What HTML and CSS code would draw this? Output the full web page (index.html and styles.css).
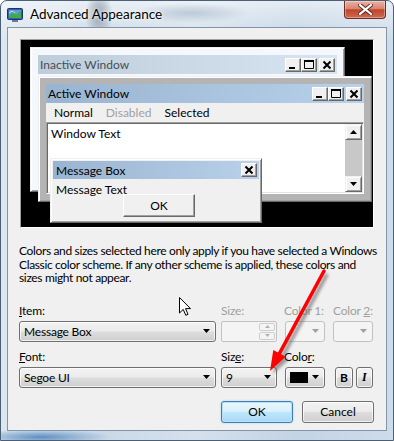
FILE: index.html
```html
<!DOCTYPE html>
<html lang="en">

<head>
    <meta charset="UTF-8" />
    <title>Advanced Appearance</title>
    <link rel="stylesheet" href="styles.css">
</head>

<body>
    <div class="dialog">
        <div class="title-bar">
            <svg class="app-icon" width="16" height="16" viewBox="0 0 16 16">
                <rect x="0.5" y="1.5" width="15" height="11" rx="1" fill="#3a5fa8" stroke="#1d3170" />
                <rect x="2" y="3" width="12" height="8" fill="#5d9be0" />
                <path d="M2 9 L6 5 L9 8 L14 4 L14 11 L2 11 Z" fill="#3dab4a" />
                <path d="M2 6 L5 4 L8 6" stroke="#b9e4ff" stroke-width="1" fill="none" />
                <rect x="5" y="13" width="6" height="2" fill="#6b7a8c" />
            </svg>
            <span class="title-text">Advanced Appearance</span>
            <div class="close-btn">
                <svg width="15" height="11" viewBox="0 0 15 11">
                    <path d="M2 1 L13 10 M13 1 L2 10" stroke="#5a2418" stroke-width="4" stroke-linecap="square" />
                    <path d="M2 1 L13 10 M13 1 L2 10" stroke="#fff" stroke-width="2.2" stroke-linecap="square" />
                </svg>
            </div>
        </div>

        <div class="client">
            <!-- preview of the classic scheme -->
            <div class="preview">
                <div class="win win-inactive">
                    <div class="caption inactive">
                        <span>Inactive Window</span>
                        <div class="cap-btns">
                            <div class="cap-btn"><svg width="14" height="12"><rect x="3" y="8" width="6" height="2" /></svg></div>
                            <div class="cap-btn"><svg width="14" height="12"><path d="M2.5 1.5 H11.5 V9.5 H2.5 Z" fill="none" stroke="#000" /><rect x="2" y="1" width="10" height="2" /></svg></div>
                            <div class="cap-btn close"><svg width="14" height="12"><path d="M3.5 2.5 L10.5 9.5 M10.5 2.5 L3.5 9.5" stroke="#000" stroke-width="2" /></svg></div>
                        </div>
                    </div>
                </div>

                <div class="win win-active">
                    <div class="caption active">
                        <span>Active Window</span>
                        <div class="cap-btns">
                            <div class="cap-btn"><svg width="14" height="12"><rect x="3" y="8" width="6" height="2" /></svg></div>
                            <div class="cap-btn"><svg width="14" height="12"><path d="M2.5 1.5 H11.5 V9.5 H2.5 Z" fill="none" stroke="#000" /><rect x="2" y="1" width="10" height="2" /></svg></div>
                            <div class="cap-btn close"><svg width="14" height="12"><path d="M3.5 2.5 L10.5 9.5 M10.5 2.5 L3.5 9.5" stroke="#000" stroke-width="2" /></svg></div>
                        </div>
                    </div>
                    <div class="menu-bar">
                        <span>Normal</span>
                        <span class="disabled">Disabled</span>
                        <span>Selected</span>
                    </div>
                    <div class="text-area">
                        <div class="text-body">Window Text</div>
                        <div class="scrollbar">
                            <div class="sb-btn"><svg width="7" height="4"><path d="M3.5 0 L7 4 L0 4 Z" /></svg></div>
                            <div class="sb-track"></div>
                            <div class="sb-btn"><svg width="7" height="4"><path d="M0 0 L7 0 L3.5 4 Z" /></svg></div>
                        </div>
                    </div>
                </div>

                <div class="win msg-box">
                    <div class="caption active">
                        <span>Message Box</span>
                        <div class="cap-btns">
                            <div class="cap-btn close"><svg width="14" height="12"><path d="M3.5 2.5 L10.5 9.5 M10.5 2.5 L3.5 9.5" stroke="#000" stroke-width="2" /></svg></div>
                        </div>
                    </div>
                    <div class="msg-body">
                        <div class="msg-text">Message Text</div>
                        <div class="classic-btn">OK</div>
                    </div>
                </div>
            </div>

            <p class="note">Colors and sizes selected here only apply if you have selected a Windows<br>Classic color scheme. If any other scheme is applied, these colors and<br>sizes might not appear.</p>

            <div class="fields">
                <label><u>I</u>tem:</label>
                <label class="off">Size:</label>
                <label class="off">Color 1:</label>
                <label class="off">Color <u>2</u>:</label>

                <div class="combo wide">
                    <span>Message Box</span>
                    <svg class="drop" width="7" height="4"><path d="M0 0 L7 0 L3.5 4 Z" /></svg>
                </div>
                <div class="spin off">
                    <div class="spin-btns">
                        <div class="spin-btn"><svg width="5" height="3"><path d="M2.5 0 L5 3 L0 3 Z" /></svg></div>
                        <div class="spin-btn"><svg width="5" height="3"><path d="M0 0 L5 0 L2.5 3 Z" /></svg></div>
                    </div>
                </div>
                <div class="combo small off shift">
                    <svg class="drop" width="7" height="4"><path d="M0 0 L7 0 L3.5 4 Z" /></svg>
                </div>
                <div class="combo small off">
                    <svg class="drop" width="7" height="4"><path d="M0 0 L7 0 L3.5 4 Z" /></svg>
                </div>

                <label class="row2"><u>F</u>ont:</label>
                <label class="row2">Siz<u>e</u>:</label>
                <label class="row2">Colo<u>r</u>:</label>
                <span></span>

                <div class="combo wide">
                    <span>Segoe UI</span>
                    <svg class="drop" width="7" height="4"><path d="M0 0 L7 0 L3.5 4 Z" /></svg>
                </div>
                <div class="combo size">
                    <span>9</span>
                    <svg class="drop" width="7" height="4"><path d="M0 0 L7 0 L3.5 4 Z" /></svg>
                </div>
                <div class="combo small shift">
                    <span class="swatch"></span>
                    <svg class="drop" width="7" height="4"><path d="M0 0 L7 0 L3.5 4 Z" /></svg>
                </div>
                <div class="style-btns">
                    <div class="style-btn bold">B</div>
                    <div class="style-btn italic">I</div>
                </div>
            </div>

            <div class="actions">
                <button class="btn default">OK</button>
                <button class="btn">Cancel</button>
            </div>
        </div>

        <!-- red annotation arrow -->
        <svg class="annotation" width="394" height="441" viewBox="0 0 394 441">
            <defs>
                <filter id="soft" x="-20%" y="-20%" width="140%" height="140%">
                    <feGaussianBlur stdDeviation="1.5" />
                </filter>
            </defs>
            <g transform="translate(3 3)" filter="url(#soft)" opacity="0.55">
                <path d="M324 271 L279.5 353.4" stroke="#555" stroke-width="4" />
                <path d="M270 371 L285.7 356.7 L273.3 350.1 Z" fill="#555" />
            </g>
            <path d="M324 271 L279.5 353.4" stroke="#f00" stroke-width="3.5" stroke-linecap="round" />
            <path d="M270 371 L285.7 356.7 L273.3 350.1 Z" fill="#f00" />
        </svg>

        <svg class="pointer" width="13" height="20" viewBox="0 0 13 20">
            <path d="M0.5 0.5 L0.5 16 L4.2 12.4 L6.8 18.3 L9 17.3 L6.5 11.6 L11.5 11.6 Z" fill="#fff" stroke="#000" stroke-width="1" stroke-linejoin="round" />
        </svg>
    </div>
</body>

</html>
```

FILE: styles.css
```css
* {
    box-sizing: border-box;
}

body {
    margin: 0;
    font-family: Lato, "Open Sans", sans-serif;
    font-size: 12px;
    color: #000;
    background: #fff;
}

.dialog {
    position: relative;
    width: 394px;
    height: 441px;
    display: flex;
    flex-direction: column;
    padding: 0 6px 9px;
    border: 1px solid #4d5f72;
    border-radius: 7px 7px 0 0;
    overflow: hidden;
    background:
        radial-gradient(ellipse 14px 22px at 98px 14px, #8d9aa8, transparent),
        radial-gradient(ellipse 60px 10px at 190px 12px, rgba(140, 160, 185, 0.45), transparent),
        radial-gradient(ellipse 70px 8px at 40px 436px, #5f8fc2, transparent),
        linear-gradient(to bottom, rgba(255, 255, 255, 0.55), rgba(255, 255, 255, 0) 40px),
        linear-gradient(to right, #dce7f1 0%, #cbd9e7 25%, #d4e0ec 50%, #c3d4e5 75%, #cddcea 100%);
}

.title-bar {
    height: 26px;
    flex-shrink: 0;
    display: flex;
    align-items: center;
}

.app-icon {
    margin-top: 2px;
}

.title-text {
    margin-left: 7px;
    font-size: 13.5px;
    text-shadow: 0 0 6px #fff, 0 0 3px #fff;
}

.close-btn {
    margin-left: auto;
    margin-right: 1px;
    align-self: flex-start;
    width: 42px;
    height: 18px;
    display: flex;
    align-items: center;
    justify-content: center;
    border: 1px solid #6e2d22;
    border-top: none;
    border-radius: 0 0 4px 4px;
    background: linear-gradient(#eab2a5, #d98470 45%, #c1452d 52%, #cf6a50 100%);
    box-shadow: inset 0 0 0 1px rgba(255, 255, 255, 0.35);
}

.client {
    flex: 1;
    min-height: 0;
    display: flex;
    flex-direction: column;
    padding: 0 12px 0 11px;
    background: #f0f0f0;
    border: 1px solid #8295a8;
}

/* preview */
.preview {
    position: relative;
    margin: 11px 0 0 1px;
    width: 354px;
    height: 189px;
    flex-shrink: 0;
    background: #000;
    border: 1px solid;
    border-color: #a0a0a0 #fff #fff #a0a0a0;
}

.win {
    position: absolute;
    display: flex;
    flex-direction: column;
    border: 1px solid;
    border-color: #f0f0f0 #696969 #696969 #f0f0f0;
    box-shadow: inset 1px 1px #fff, inset -1px -1px #a0a0a0;
}

.win-inactive {
    left: 9px;
    top: 7px;
    width: 315px;
    height: 145px;
    padding: 7px;
    background: #f4f7fc;
}

.win-active {
    left: 17px;
    top: 36px;
    width: 334px;
    height: 126px;
    padding: 7px;
    background: #b4b4b4;
}

.msg-box {
    left: 29px;
    top: 118px;
    width: 212px;
    height: 65px;
    padding: 2px;
    background: #f0f0f0;
}

.caption {
    height: 19px;
    flex-shrink: 0;
    display: flex;
    align-items: center;
    padding: 0 2px;
}

.caption.active {
    background: linear-gradient(to right, #99b4d1, #b9d1ea);
}

.caption.inactive {
    background: linear-gradient(to right, #bfcddb, #d7e4f2);
    color: #434e54;
}

.msg-box .caption {
    height: 18px;
    padding: 0 2px 0 3px;
}

.cap-btns {
    margin-left: auto;
    display: flex;
}

.cap-btn {
    width: 16px;
    height: 14px;
    background: #f0f0f0;
    border: 1px solid;
    border-color: #fff #696969 #696969 #fff;
    box-shadow: inset -1px -1px #a0a0a0;
    display: flex;
}

.cap-btn.close {
    margin-left: 2px;
}

.menu-bar {
    height: 19px;
    flex-shrink: 0;
    display: flex;
    align-items: center;
    gap: 13px;
    padding-left: 8px;
    background: #f0f0f0;
}

.menu-bar .disabled {
    color: #a0a0a0;
}

.text-area {
    flex: 1;
    display: flex;
    background: #fff;
    border: 1px solid;
    border-color: #a0a0a0 #fff #fff #a0a0a0;
    box-shadow: inset 1px 1px #696969, inset -1px -1px #e3e3e3;
    padding: 1px;
}

.text-body {
    flex: 1;
    padding: 2px 3px;
}

.scrollbar {
    width: 17px;
    display: flex;
    flex-direction: column;
}

.sb-btn {
    height: 16px;
    display: flex;
    align-items: center;
    justify-content: center;
    background: #f0f0f0;
    border: 1px solid;
    border-color: #f0f0f0 #696969 #696969 #f0f0f0;
    box-shadow: inset 1px 1px #fff, inset -1px -1px #a0a0a0;
}

.sb-track {
    flex: 1;
    background: #c8c8c8;
}

.msg-body {
    flex: 1;
    padding: 4px 0 0 3px;
}

.msg-text {
    line-height: 14px;
}

.classic-btn {
    width: 72px;
    height: 23px;
    margin: -3px 0 0 67px;
    display: flex;
    align-items: center;
    justify-content: center;
    background: #f0f0f0;
    border: 1px solid;
    border-color: #fff #696969 #696969 #fff;
    box-shadow: inset -1px -1px #a0a0a0;
}

/* note */
.note {
    margin: 16px 0 0;
    line-height: 13.5px;
    white-space: nowrap;
    letter-spacing: -0.35px;
}

/* fields */
.fields {
    margin-top: 19px;
    display: grid;
    grid-template-columns: 202px 63px 49px 40px;
    align-items: start;
    letter-spacing: -0.2px;
}

.fields label {
    line-height: 14px;
    white-space: nowrap;
}

.fields label.row2 {
    margin-top: 8px;
}

.fields .off {
    color: #a0a0a0;
}

.combo {
    margin-top: 3px;
    height: 21px;
    display: flex;
    align-items: center;
    padding: 0 5px 0 4px;
    border: 1px solid #707070;
    border-radius: 3px;
    background: linear-gradient(#f3f3f3 0%, #ebebeb 48%, #dddddd 52%, #cfcfcf 100%);
    box-shadow: inset 0 0 0 1px rgba(255, 255, 255, 0.7);
}

.combo .drop {
    margin-left: auto;
}

.combo.wide {
    width: 197px;
}

.combo.size {
    width: 56px;
}

.combo.small {
    width: 40px;
}

.combo.shift {
    margin-left: 1px;
}

.combo.off {
    border-color: #c2c2c2;
    background: #f4f4f4;
    box-shadow: none;
}

.combo.off .drop {
    fill: #a0a0a0;
}

.swatch {
    width: 18px;
    height: 11px;
    background: #000;
}

.spin {
    margin-top: 3px;
    width: 56px;
    height: 21px;
    display: flex;
    justify-content: flex-end;
    padding: 1px;
    border: 1px solid #c2c2c2;
    border-radius: 2px;
    background: #f4f4f4;
}

.spin-btns {
    width: 16px;
    display: flex;
    flex-direction: column;
    gap: 1px;
}

.spin-btn {
    flex: 1;
    display: flex;
    align-items: center;
    justify-content: center;
    border: 1px solid #cfcfcf;
    border-radius: 2px;
    background: #f4f4f4;
    fill: #b0b0b0;
}

.style-btns {
    margin-top: 3px;
    display: flex;
    gap: 3px;
    padding-left: 2px;
}

.style-btn {
    width: 18px;
    height: 21px;
    display: flex;
    align-items: center;
    justify-content: center;
    border: 1px solid #707070;
    border-radius: 3px;
    background: linear-gradient(#f3f3f3 0%, #ebebeb 48%, #dddddd 52%, #cfcfcf 100%);
    box-shadow: inset 0 0 0 1px rgba(255, 255, 255, 0.7);
}

.style-btn.bold {
    font-weight: 700;
}

.style-btn.italic {
    font-family: "Liberation Serif", serif;
    font-style: italic;
    font-weight: 700;
}

/* buttons */
.actions {
    margin-top: 13px;
    display: flex;
    justify-content: flex-end;
    gap: 9px;
}

.btn {
    width: 72px;
    height: 22px;
    padding: 0;
    font: inherit;
    color: #000;
    border: 1px solid #707070;
    border-radius: 3px;
    background: linear-gradient(#f3f3f3 0%, #ebebeb 48%, #dddddd 52%, #cfcfcf 100%);
    box-shadow: inset 0 0 0 1px rgba(255, 255, 255, 0.7);
}

.btn.default {
    border-color: #3c7fb1;
    background: linear-gradient(#eaf6fd 0%, #d9f0fc 48%, #bee6fd 52%, #a7d9f5 100%);
    box-shadow: inset 0 0 0 1px #b8e1f8, 0 0 2px #9fd2f5;
}

/* overlays */
.annotation {
    position: absolute;
    left: -1px;
    top: -1px;
    pointer-events: none;
}

.pointer {
    position: absolute;
    left: 178px;
    top: 296px;
}
```
